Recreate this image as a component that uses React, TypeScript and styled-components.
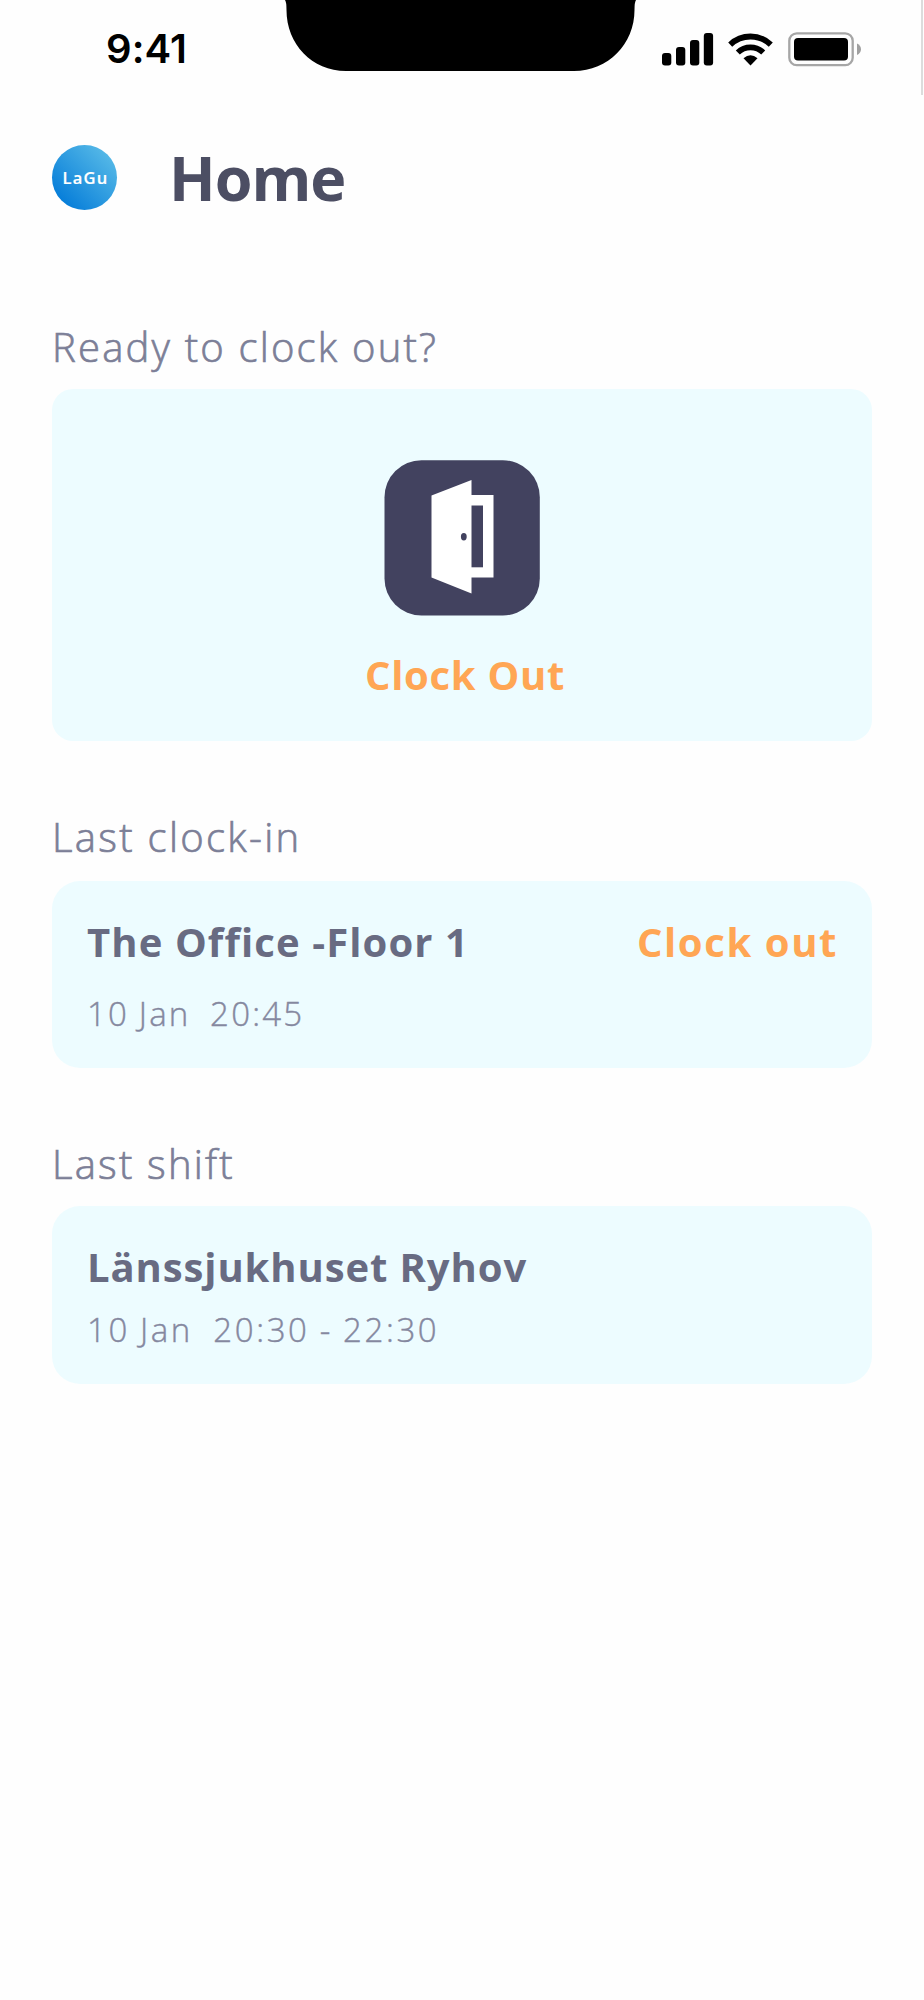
import React from "react";
import styled, { createGlobalStyle } from "styled-components";

const GlobalStyle = createGlobalStyle`
  * { box-sizing: border-box; }
  body { margin: 0; background: #fefefe; }
`;

const Screen = styled.main`
  position: relative;
  width: 924px;
  height: 2000px;
  overflow: hidden;
  background: #fefefe;
  font-family: "Open Sans", "Noto Sans", sans-serif;
`;

const StatusBar = styled.header`
  display: flex;
  justify-content: space-between;
  height: 95px;
  padding: 25px 60px 0 106px;
  border-right: 2px solid #dcdcdc;
  margin-right: 1px;
`;

const Time = styled.time`
  font: 600 40px/48px Inter, sans-serif;
  letter-spacing: 0.1px;
  color: #000;
`;

const Notch = styled.svg`
  position: absolute;
  left: 284px;
  top: 0;
`;

const StatusIcons = styled.svg`
  margin-top: 5px;
`;

const TitleBar = styled.div`
  display: flex;
  align-items: flex-start;
  height: 228px;
  padding: 47px 52px 0;
`;

const Avatar = styled.div`
  display: flex;
  align-items: center;
  justify-content: center;
  width: 65px;
  height: 65px;
  margin: 2.5px 52px 0 0;
  border-radius: 50%;
  background: linear-gradient(45deg, #0079d8 8%, #56b9e7 88%);
  color: #fff;
  font-size: 16.5px;
  font-weight: 600;
  letter-spacing: 1.2px;
  padding-left: 2px;
  -webkit-text-stroke: 0.2px currentColor;
`;

const PageTitle = styled.h1`
  margin: 0;
  font-size: 61px;
  line-height: 72px;
  font-weight: 700;
  letter-spacing: -1px;
  color: #4c4e63;
`;

const Section = styled.section<{ $height: number }>`
  display: flex;
  flex-direction: column;
  height: ${(p) => p.$height}px;
  padding: 0 52px;
`;

const Label = styled.h2<{ $gap: number; $track: number }>`
  margin: 0 0 ${(p) => p.$gap}px;
  font-size: 40px;
  line-height: 48px;
  font-weight: 300;
  letter-spacing: ${(p) => p.$track}px;
  white-space: nowrap;
  color: #7c7f97;
  -webkit-text-stroke: 0.7px currentColor;
`;

const ActionCard = styled.div`
  display: flex;
  flex-direction: column;
  align-items: center;
  height: 352px;
  padding-top: 71px;
  border-radius: 21px;
  background: #edfcff;
`;

const DoorTile = styled.svg`
  margin-bottom: 35px;
`;

const Action = styled.button<{ $track: number; $indent?: number }>`
  padding: 0 0 0 ${(p) => p.$indent ?? 0}px;
  border: 0;
  background: none;
  font: 700 40px/48px "Open Sans", "Noto Sans", sans-serif;
  letter-spacing: ${(p) => p.$track}px;
  white-space: nowrap;
  color: #ffa654;
`;

const InfoCard = styled.div<{ $height: number }>`
  height: ${(p) => p.$height}px;
  padding: 37px 34px 0 35px;
  border-radius: 28px;
  background: #edfcff;
`;

const CardRow = styled.div`
  display: flex;
  justify-content: space-between;
`;

const CardTitle = styled.h3<{ $track: number }>`
  margin: 0;
  font-size: 40px;
  line-height: 48px;
  font-weight: 700;
  letter-spacing: ${(p) => p.$track}px;
  white-space: nowrap;
  color: #686b82;
`;

const Stamp = styled.p<{ $gap: number; $track: number }>`
  margin: ${(p) => p.$gap}px 0 0;
  font-size: 33px;
  line-height: 40px;
  font-weight: 300;
  letter-spacing: ${(p) => p.$track}px;
  word-spacing: -1px;
  white-space: pre;
  color: #85889f;
  -webkit-text-stroke: 0.4px currentColor;
`;

export default function App() {
  return (
    <Screen>
      <GlobalStyle />
      <StatusBar>
        <Time>9:41</Time>
        <Notch width="354" height="72" viewBox="0 0 354 72">
          <path d="M1 0Q2.500 2 2.500 10C2.500 44 28 71 62 71H290C324 71 350.500 44 350.500 10Q350.500 2 352 0Z" fill="#000" />
        </Notch>
        <StatusIcons width="201" height="40" viewBox="660 30 201 40">
          <rect x="662" y="53" width="9.300" height="12.500" rx="3" />
          <rect x="676" y="47" width="9.300" height="18.500" rx="3" />
          <rect x="690" y="40" width="9.300" height="25.500" rx="3" />
          <rect x="703.800" y="33" width="9.300" height="32.500" rx="3" />
          <path d="M750.500 65.500l-7-7.200q7-6.200 14 0z" />
          <path d="M737.800 52.500a18.500 18.500 0 0 1 25.400 0" fill="none" stroke="#000" strokeWidth="5.800" />
          <path d="M730.200 44.600a29.500 29.500 0 0 1 40.600 0" fill="none" stroke="#000" strokeWidth="5.800" />
          <rect x="789.300" y="33.300" width="63.400" height="31.900" rx="7.500" fill="none" stroke="#a6a6a6" strokeWidth="2.300" />
          <rect x="794" y="38" width="54" height="22.500" rx="4" />
          <path d="M857 43.500c5.300 2.200 5.300 9.300 0 11.500z" fill="#a0a0a0" />
        </StatusIcons>
      </StatusBar>

      <TitleBar>
        <Avatar>LaGu</Avatar>
        <PageTitle>Home</PageTitle>
      </TitleBar>

      <Section $height={490}>
        <Label $gap={18} $track={2.2}>Ready to clock out?</Label>
        <ActionCard>
          <DoorTile width="156" height="156" viewBox="384 460 156 156">
            <rect x="384.500" y="460.200" width="155.300" height="155.300" rx="37" fill="#42425f" />
            <path fill="#fff" d="M431.500 495.500 471.500 480V495H493.500V577.500H471.500V593.500L431.500 577.500Z" />
            <path fill="#42425f" d="M471.500 505.500H483V567.300H471.500Z" />
            <ellipse cx="463.800" cy="536.700" rx="2.900" ry="3.700" fill="#42425f" />
          </DoorTile>
          <Action $track={0.7} $indent={6}>Clock Out</Action>
        </ActionCard>
      </Section>

      <Section $height={327}>
        <Label $gap={20} $track={2.3}>Last clock-in</Label>
        <InfoCard $height={186.5}>
          <CardRow>
            <CardTitle $track={1.1}>The Office -Floor 1</CardTitle>
            <Action $track={1.6}>Clock out</Action>
          </CardRow>
          <Stamp $gap={28} $track={2.2}>{"10 Jan  20:45"}</Stamp>
        </InfoCard>
      </Section>

      <Section $height={260}>
        <Label $gap={18} $track={2.2}>Last shift</Label>
        <InfoCard $height={177.5}>
          <CardTitle $track={0.9}>Länssjukhuset Ryhov</CardTitle>
          <Stamp $gap={19} $track={2.6}>{"10 Jan  20:30 - 22:30"}</Stamp>
        </InfoCard>
      </Section>
    </Screen>
  );
}
